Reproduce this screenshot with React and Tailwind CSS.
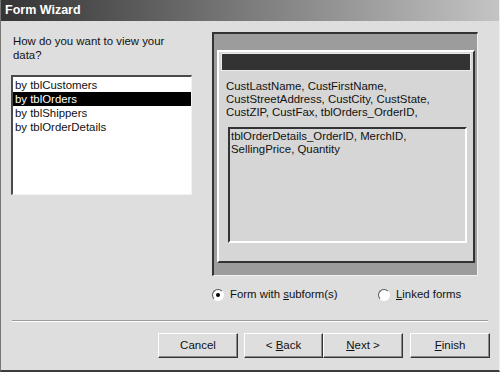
import React, { useState } from "react";

const items = ["by tblCustomers", "by tblOrders", "by tblShippers", "by tblOrderDetails"];

const Radio = ({ checked }) => (
  <div className="w-[12px] h-[12px] rounded-full bg-white border border-t-[#555] border-l-[#555] border-b-white border-r-white flex items-center justify-center">
    {checked && <div className="w-[4px] h-[4px] rounded-full bg-black" />}
  </div>
);

const WizButton = ({ children, className = "" }) => (
  <button
    className={`h-[25px] bg-[#dedede] border border-t-white border-l-white border-b-[#333] border-r-[#333] shadow-[inset_-1px_-1px_0_#8a8a8a] text-[11.5px] text-[#111] ${className}`}
  >
    {children}
  </button>
);

export default function App() {
  const [selected, setSelected] = useState(1);
  const [mode, setMode] = useState("sub");

  return (
    <div
      className="w-[500px] h-[372px] bg-[#dedede] flex flex-col border-b-2 border-[#3c3c3c] border-l border-r border-l-[#777] border-r-[#efefef] text-[#111] overflow-hidden"
      style={{ fontFamily: '"Liberation Sans", Arial, sans-serif' }}
    >
      <div className="h-[21px] shrink-0 bg-gradient-to-r from-[#353535] via-[#7c7c7c] to-[#c4c4c4] text-white font-bold text-[12.5px] pl-[4px] flex items-center">
        Form Wizard
      </div>

      <div className="flex pt-[11px]">
        {/* left column */}
        <div className="ml-[10px] w-[181px] flex flex-col">
          <p className="pl-[2px] pt-[2px] text-[11.4px] leading-[14px]">
            How do you want to view your
            <br />
            data?
          </p>
          <div className="mt-[13px] h-[120px] bg-white border-t-2 border-l-2 border-[#4a4a4a] border-b border-r border-b-[#f2f2f2] border-r-[#f2f2f2] pt-[1px] text-[11.4px] leading-[14px]">
            {items.map((it, i) => (
              <div
                key={it}
                onClick={() => setSelected(i)}
                className={`pl-[2px] ${selected === i ? "bg-black text-white" : ""}`}
              >
                {it}
              </div>
            ))}
          </div>
        </div>

        {/* preview */}
        <div className="ml-[20px] flex flex-col">
          <div className="w-[266px] h-[244px] bg-[#9c9c9c] border-t-2 border-l-2 border-[#333] border-b border-r border-b-[#f0f0f0] border-r-[#f0f0f0] pt-[16px] pl-[3px] pr-[2px] pb-[12px]">
            <div className="h-full bg-[#d6d6d6] border-t-2 border-l-2 border-white border-b-2 border-r-2 border-b-[#333] border-r-[#333] pt-[1px] px-[2px]">
              <div className="h-[18px] bg-[#333] border border-[#eaeaea]" />
              <p className="pl-[5px] mt-[9px] text-[11.4px] leading-[13px]">
                CustLastName, CustFirstName,
                <br />
                CustStreetAddress, CustCity, CustState,
                <br />
                CustZIP, CustFax, tblOrders_OrderID,
              </p>
              <div className="ml-[7px] mr-[4px] mt-[8px] h-[116px] border-t-2 border-l-2 border-[#333] border-b-2 border-r-2 border-b-white border-r-white pl-[1px] pt-[1px] text-[11.4px] leading-[13px]">
                tblOrderDetails_OrderID, MerchID,
                <br />
                SellingPrice, Quantity
              </div>
            </div>
          </div>

          <div className="mt-[12px] flex items-center text-[11.4px] h-[14px]">
            <label className="flex items-center gap-[6px] w-[166px]" onClick={() => setMode("sub")}>
              <Radio checked={mode === "sub"} />
              <span>
                Form with <u>s</u>ubform(s)
              </span>
            </label>
            <label className="flex items-center gap-[6px]" onClick={() => setMode("linked")}>
              <Radio checked={mode === "linked"} />
              <span>
                <u>L</u>inked forms
              </span>
            </label>
          </div>
        </div>
      </div>

      <div className="mx-[11px] mt-[18px] border-t border-[#9a9a9a] border-b border-b-white" />

      <div className="mt-[11px] flex justify-end pr-[9px]">
        <WizButton className="w-[80px]">Cancel</WizButton>
        <WizButton className="w-[79px] ml-[6px]">
          &lt; <u>B</u>ack
        </WizButton>
        <WizButton className="w-[80px]">
          <u>N</u>ext &gt;
        </WizButton>
        <WizButton className="w-[80px] ml-[7px]">
          <u>F</u>inish
        </WizButton>
      </div>
    </div>
  );
}
